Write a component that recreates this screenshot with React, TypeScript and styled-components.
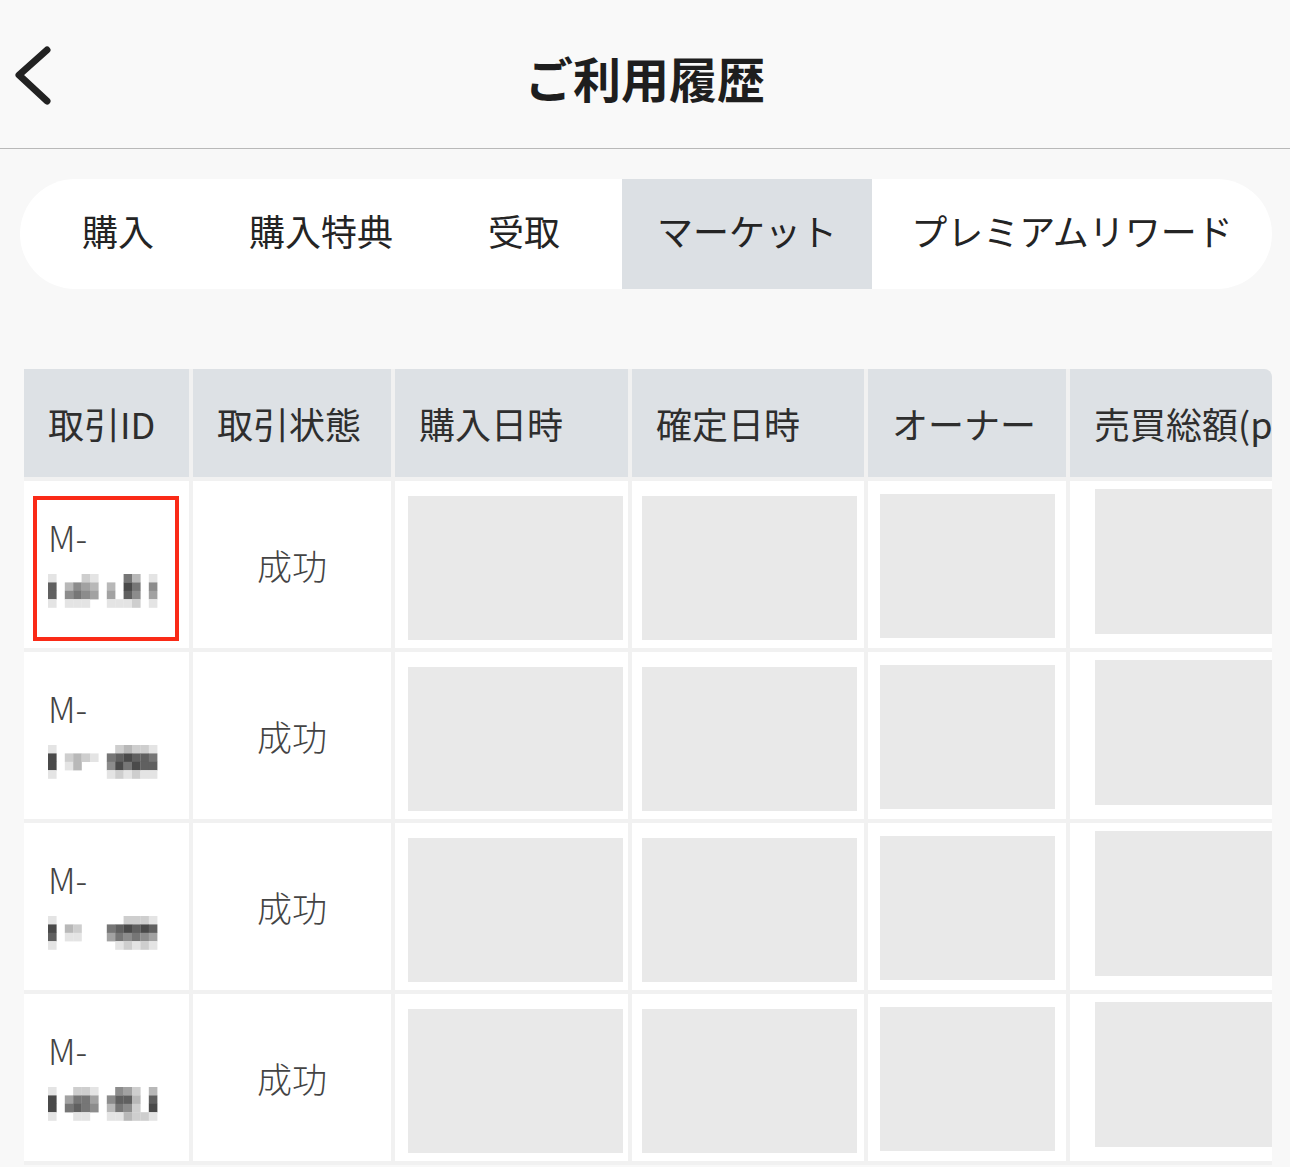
import React from 'react';
import styled, { createGlobalStyle } from 'styled-components';

const GlobalStyle = createGlobalStyle`
  html, body {
    margin: 0;
    padding: 0;
    background: #f8f8f8;
    font-family: "Noto Sans CJK JP", "Noto Sans", sans-serif;
    color: #222;
  }
`;

const Page = styled.div`
  width: 1290px;
  min-height: 1167px;
  overflow: hidden;
`;

const TopBar = styled.header`
  height: 149px;
  display: grid;
  grid-template-columns: 1fr auto 1fr;
  align-items: center;
  padding: 6px 15px 0;
  box-sizing: border-box;
  border-bottom: 1px solid #b9b9b9;
  background: #f9f9f9;
`;

const BackButton = styled.button`
  justify-self: start;
  width: 40px;
  height: 64px;
  padding: 0;
  border: none;
  background: none;
  display: flex;
  align-items: center;
`;

const Title = styled.h1`
  margin: 0;
  font-size: 48px;
  font-weight: 700;
  color: #1e1e1e;
`;

const TabBar = styled.nav`
  margin: 30px 18px 0 20px;
  height: 110px;
  background: #fff;
  border-radius: 55px;
  overflow: hidden;
  display: grid;
  grid-template-columns: 196px 210px 196px 250px 1fr;
`;

const Tab = styled.div<{ $active?: boolean }>`
  display: flex;
  align-items: center;
  justify-content: center;
  padding-bottom: 8px;
  font-size: 36px;
  color: #242424;
  white-space: nowrap;
  background: ${p => (p.$active ? '#dce0e4' : 'transparent')};
`;

const TableWrap = styled.div`
  margin: 80px 18px 0 24px;
  border-radius: 0 8px 0 0;
  overflow: hidden;
  background: #f1f1f1;
`;

const Grid = styled.div`
  display: grid;
  grid-template-columns: 165px 198px 233px 232px 198px 1fr;
  grid-template-rows: 108px;
  grid-auto-rows: 167px;
  gap: 4px;
  padding-bottom: 4px;
`;

const HeadCell = styled.div`
  background: #dde1e5;
  display: flex;
  align-items: center;
  padding-left: 24px;
  font-size: 36px;
  color: #2e2e2e;
  white-space: nowrap;
  overflow: hidden;
`;

const Cell = styled.div<{ $center?: boolean }>`
  position: relative;
  background: #fff;
  display: flex;
  flex-direction: column;
  justify-content: center;
  align-items: ${p => (p.$center ? 'center' : 'stretch')};
  font-size: 35px;
  font-weight: 300;
  color: #444;
`;

const IdCell = styled(Cell)`
  justify-content: flex-start;
  align-items: flex-start;
  padding: 36px 0 0 24px;
`;

const IdPrefix = styled.span`
  line-height: 40px;
  margin-bottom: 17px;
`;

const Placeholder = styled.div<{ $margin: string }>`
  flex: 1;
  margin: ${p => p.$margin};
  background: #e9e9e9;
`;

const Highlight = styled.div`
  position: absolute;
  left: 9px;
  top: 15px;
  width: 146px;
  height: 145px;
  box-sizing: border-box;
  border: 4px solid #fa2a17;
  pointer-events: none;
`;

// pixelated transaction numbers, one digit per block = grey level
const mosaics = [
  ['10002100063010', '70354303086050', '70565404075040', '10111001112010'],
  ['10000000232210', '80232106787760', '80130005868770', '10000001212110'],
  ['10000000022210', '80320006787870', '70110004656540', '10000000121210'],
  ['10022100542030', '80466405773070', '80676503652080', '10011001132210'],
];

function Mosaic({ rows }: { rows: string[] }) {
  const size = 8.4;
  return (
    <svg width={rows[0].length * size} height={rows.length * size} style={{ display: 'block' }}>
      {rows.flatMap((row, y) =>
        row.split('').map((ch, x) => {
          const v = Number(ch);
          if (!v) return null;
          const g = 250 - v * 22;
          return <rect key={`${x}-${y}`} x={x * size} y={y * size} width={size + 0.2} height={size + 0.2} fill={`rgb(${g},${g},${g})`} />;
        })
      )}
    </svg>
  );
}

const headers = ['取引ID', '取引状態', '購入日時', '確定日時', 'オーナー', '売買総額(pt)'];
const placeholderMargins = ['15px 5px 8px 13px', '15px 7px 8px 10px', '13px 11px 10px 12px', '8px 0 14px 25px'];

export default function App() {
  const tabs = ['購入', '購入特典', '受取', 'マーケット', 'プレミアムリワード'];

  return (
    <Page>
      <GlobalStyle />
      <TopBar>
        <BackButton aria-label="戻る">
          <svg width="40" height="64" viewBox="0 0 40 64">
            <path d="M32 5 L4 30 L32 56" fill="none" stroke="#222" strokeWidth="7" strokeLinecap="round" strokeLinejoin="round" />
          </svg>
        </BackButton>
        <Title>ご利用履歴</Title>
        <div />
      </TopBar>

      <TabBar>
        {tabs.map(t => (
          <Tab key={t} $active={t === 'マーケット'}>{t}</Tab>
        ))}
      </TabBar>

      <TableWrap>
        <Grid>
          {headers.map(h => (
            <HeadCell key={h}>{h}</HeadCell>
          ))}
          {mosaics.map((m, i) => (
            <React.Fragment key={i}>
              <IdCell>
                <IdPrefix>M-</IdPrefix>
                <Mosaic rows={m} />
                {i === 0 && <Highlight />}
              </IdCell>
              <Cell $center>成功</Cell>
              {placeholderMargins.map((mg, j) => (
                <Cell key={j}>
                  <Placeholder $margin={mg} />
                </Cell>
              ))}
            </React.Fragment>
          ))}
        </Grid>
      </TableWrap>
    </Page>
  );
}
